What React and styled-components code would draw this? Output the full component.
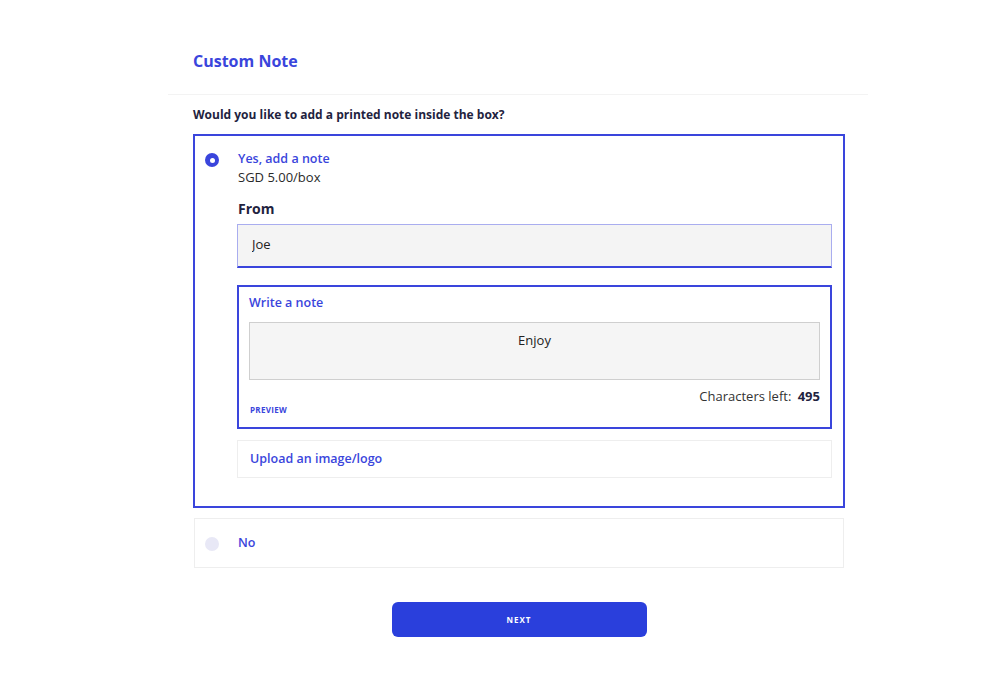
import React, { useState } from 'react';
import styled, { createGlobalStyle } from 'styled-components';

const blue = '#3a45dc';
const navy = '#1f2340';

const GlobalStyle = createGlobalStyle`
  body {
    margin: 0;
    background: #fff;
    font-family: "Open Sans", "Liberation Sans", sans-serif;
    color: ${navy};
  }
`;

export default function App() {
  const [choice, setChoice] = useState('yes');
  const [from, setFrom] = useState('Joe');
  const [note, setNote] = useState('Enjoy');

  return (
    <>
      <GlobalStyle />
      <Page>
        <Panel>
          <Header>
            <h2>Custom Note</h2>
          </Header>
          <Body>
            <Question>Would you like to add a printed note inside the box?</Question>
            <Option selected={choice === 'yes'} onClick={() => setChoice('yes')}>
              <Radio checked={choice === 'yes'} />
              <OptionContent>
                <OptionTitle>Yes, add a note</OptionTitle>
                <Price>SGD 5.00/box</Price>
                <FieldLabel>From</FieldLabel>
                <TextInput value={from} onChange={e => setFrom(e.target.value)} />
                <NoteBox>
                  <BoxTitle>Write a note</BoxTitle>
                  <NoteArea value={note} onChange={e => setNote(e.target.value)} />
                  <Counter>Characters left: <b>{500 - note.length}</b></Counter>
                  <PreviewLink>Preview</PreviewLink>
                </NoteBox>
                <UploadBox>
                  <BoxTitle>Upload an image/logo</BoxTitle>
                </UploadBox>
              </OptionContent>
            </Option>
            <Option selected={choice === 'no'} compact onClick={() => setChoice('no')}>
              <Radio checked={choice === 'no'} />
              <OptionContent>
                <OptionTitle>No</OptionTitle>
              </OptionContent>
            </Option>
            <Footer>
              <NextButton>Next</NextButton>
            </Footer>
          </Body>
        </Panel>
      </Page>
    </>
  );
}

const Page = styled.div`
  display: flex;
  justify-content: center;
  padding: 44px 0 0 36px;
`;

const Panel = styled.div`
  width: 700px;
`;

const Header = styled.div`
  padding: 0 25px 16px;
  border-bottom: 1px solid #f3f3f3;
  h2 {
    margin: 0;
    color: ${blue};
    font-size: 16px;
    font-weight: 700;
    line-height: 34px;
  }
`;

const Body = styled.div`
  padding: 12px 23px 0 25px;
`;

const Question = styled.p`
  margin: 0 0 11px;
  font-size: 12px;
  font-weight: 700;
  line-height: 16px;
`;

const Option = styled.div`
  display: flex;
  gap: 18px;
  padding: ${p => (p.compact ? '15px 11px 15px 10px' : '14px 11px 28px 10px')};
  border: ${p => (p.selected ? `2px solid ${blue}` : '1px solid #eeeeee')};
  margin: ${p => (p.selected ? '0' : '1px')};
  margin-bottom: 10px;
  cursor: pointer;
`;

const Radio = styled.span`
  flex: none;
  width: 14px;
  height: 14px;
  margin-top: 3px;
  border-radius: 50%;
  background: ${p => (p.checked ? blue : '#e8e8f6')};
  display: flex;
  align-items: center;
  justify-content: center;
  &::after {
    content: '';
    width: 5px;
    height: 5px;
    border-radius: 50%;
    background: #fff;
    display: ${p => (p.checked ? 'block' : 'none')};
  }
`;

const OptionContent = styled.div`
  flex: 1;
  display: flex;
  flex-direction: column;
`;

const OptionTitle = styled.div`
  padding-left: 1px;
  color: ${blue};
  font-size: 12.5px;
  font-weight: 600;
  line-height: 18px;
`;

const Price = styled.div`
  padding-left: 1px;
  font-size: 13px;
  color: #2a2a2a;
  line-height: 19px;
`;

const FieldLabel = styled.label`
  padding-left: 1px;
  margin-top: 12px;
  font-size: 14px;
  font-weight: 700;
  line-height: 20px;
`;

const TextInput = styled.input`
  margin-top: 5px;
  height: 44px;
  box-sizing: border-box;
  padding: 0 14px 4px;
  background: #f4f4f4;
  border: 1px solid #a9adef;
  border-bottom: 2px solid ${blue};
  font: inherit;
  font-size: 13px;
  color: #222;
  outline: none;
`;

const NoteBox = styled.div`
  margin-top: 17px;
  padding: 8px 10px 12px;
  border: 2px solid ${blue};
  display: flex;
  flex-direction: column;
`;

const BoxTitle = styled.div`
  color: ${blue};
  font-size: 12.5px;
  font-weight: 600;
  line-height: 16px;
`;

const NoteArea = styled.textarea`
  margin-top: 11px;
  height: 58px;
  box-sizing: border-box;
  resize: none;
  padding: 8px 10px;
  background: #f5f5f5;
  border: 1px solid #cfcfcf;
  text-align: center;
  font: inherit;
  font-size: 13px;
  color: #222;
  outline: none;
`;

const Counter = styled.div`
  margin-top: 7px;
  text-align: right;
  font-size: 13px;
  color: #333;
  line-height: 18px;
  b {
    margin-left: 3px;
    font-weight: 700;
    color: ${navy};
  }
`;

const PreviewLink = styled.a`
  padding-left: 1px;
  font-size: 8px;
  font-weight: 700;
  text-transform: uppercase;
  letter-spacing: 0.3px;
  color: ${blue};
  line-height: 10px;
`;

const UploadBox = styled.div`
  margin-top: 11px;
  padding: 10px 12px;
  border: 1px solid #eeeeee;
`;

const Footer = styled.div`
  display: flex;
  justify-content: center;
  padding-top: 24px;
`;

const NextButton = styled.button`
  width: 255px;
  height: 35px;
  border: none;
  border-radius: 6px;
  background: #2a3fdc;
  color: #fff;
  font-family: inherit;
  font-size: 8px;
  font-weight: 700;
  letter-spacing: 1px;
  text-transform: uppercase;
  cursor: pointer;
`;
